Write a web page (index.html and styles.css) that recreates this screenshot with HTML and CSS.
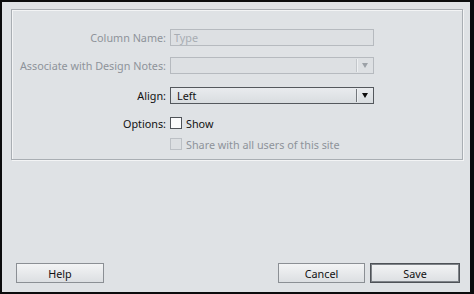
FILE: index.html
```html
<!DOCTYPE html>
<html lang="en">
<head>
    <meta charset="UTF-8">
    <title>Column Settings</title>
    <link rel="stylesheet" href="styles.css">
</head>
<body>
    <div class="window">
        <div class="group">
            <div class="row">
                <span class="label disabled">Column Name:</span>
                <div class="field disabled-field"><span class="placeholder">Type</span></div>
            </div>
            <div class="row row-2">
                <span class="label disabled">Associate with Design Notes:</span>
                <div class="select disabled-field">
                    <span class="select-text"></span>
                    <span class="arrow-box"><span class="arrow"></span></span>
                </div>
            </div>
            <div class="row row-3">
                <span class="label">Align:</span>
                <div class="select active">
                    <span class="select-text">Left</span>
                    <span class="arrow-box"><span class="arrow"></span></span>
                </div>
            </div>
            <div class="row row-4 check-row">
                <span class="label">Options:</span>
                <span class="checkbox"></span>
                <span class="check-text">Show</span>
            </div>
            <div class="row row-5 check-row">
                <span class="label"></span>
                <span class="checkbox off"></span>
                <span class="check-text disabled">Share with all users of this site</span>
            </div>
        </div>
        <div class="buttons">
            <button class="btn btn-help">Help</button>
            <div class="spacer"></div>
            <button class="btn btn-cancel">Cancel</button>
            <button class="btn btn-save">Save</button>
        </div>
    </div>
</body>
</html>
```

FILE: styles.css
```css
html, body {
    margin: 0;
    padding: 0;
}
body {
    font-family: "Noto Sans", "DejaVu Sans", sans-serif;
    font-size: 10.8px;
    color: #111;
    background: #000;
}
.window {
    width: 468px;
    height: 290px;
    border-style: solid;
    border-color: #0b0c0d;
    border-width: 2px 4px 2px 2px;
    background-color: #dfe2e5;
    display: flex;
    flex-direction: column;
}
.group {
    margin: 7px 7px 0 9px;
    height: 130px;
    border: 1px solid #a9aeb3;
    box-shadow: inset 1px 1px 0 #f3f4f5, 1px 1px 0 #f3f4f5;
    padding-top: 19px;
}
.row {
    display: flex;
    align-items: center;
    height: 17px;
}
.row-2 {
    margin-top: 11px;
}
.row-3 {
    margin-top: 13px;
}
.row-4 {
    margin-top: 12px;
}
.row-5 {
    margin-top: 7px;
}
.check-row {
    height: 14px;
}
.label {
    width: 154px;
    margin-right: 4px;
    text-align: right;
    white-space: nowrap;
}
.disabled {
    color: #8e939a;
}
.field, .select {
    width: 204px;
    height: 17px;
    box-sizing: border-box;
    border: 1px solid #b6babf;
    display: flex;
    align-items: center;
}
.disabled-field {
    background-color: #dde0e3;
}
.placeholder {
    color: #a8adb3;
    padding-left: 3px;
}
.select-text {
    flex: 1;
    padding-left: 6px;
}
.arrow-box {
    width: 16px;
    height: 13px;
    border-left: 1px solid #c3c7cb;
    box-shadow: inset 1px 0 0 #eef0f2;
    display: flex;
    align-items: center;
    justify-content: center;
}
.arrow {
    width: 0;
    height: 0;
    border-left: 3.5px solid transparent;
    border-right: 3.5px solid transparent;
    border-top: 5px solid #9ca1a7;
}
.select.active {
    border-color: #54585d;
    background: linear-gradient(#e9ebee, #d9dde0);
}
.select.active .arrow-box {
    border-left-color: #73777c;
}
.select.active .arrow {
    border-top-color: #0d0d0d;
}
.checkbox {
    width: 12px;
    height: 12px;
    box-sizing: border-box;
    border: 1px solid #4f5358;
    background-color: #fbfbfc;
}
.checkbox.off {
    border-color: #bcc0c5;
    background-color: #dcdfe2;
}
.check-text {
    margin-left: 4px;
    white-space: nowrap;
}
.buttons {
    margin-top: auto;
    margin-bottom: 9px;
    padding: 0 10px 0 14px;
    display: flex;
    align-items: center;
}
.spacer {
    flex: 1;
}
.btn {
    height: 20px;
    box-sizing: border-box;
    border: 1px solid #8b8f94;
    background: linear-gradient(#f3f4f5, #dcdfe2);
    font-family: "Noto Sans", "DejaVu Sans", sans-serif;
    font-size: 10.8px;
    color: #111;
    padding: 0;
    line-height: 17px;
}
.btn-help {
    width: 88px;
}
.btn-cancel {
    width: 87px;
    margin-right: 5px;
}
.btn-save {
    width: 90px;
    border-color: #4e5257;
    box-shadow: inset 0 0 0 1px #7f8388;
}
```
